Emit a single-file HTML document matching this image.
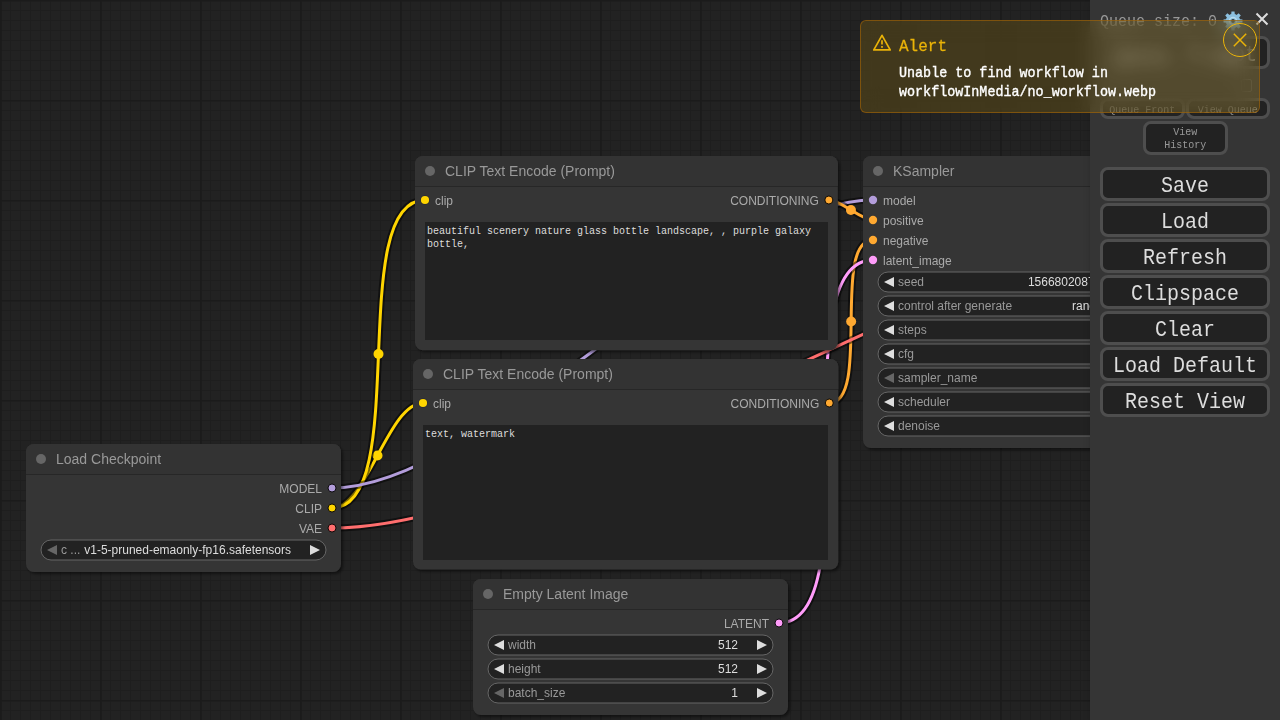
<!DOCTYPE html>
<html><head><meta charset="utf-8"><style>
*{box-sizing:border-box}
html,body{margin:0;padding:0;width:1280px;height:720px;overflow:hidden;background:#222}
.ta{position:absolute;background:#222;color:#ddd;font-family:"Liberation Mono",monospace;font-size:10px;line-height:13px;padding:3px 2px 2px 2px;overflow:hidden;word-wrap:break-word;white-space:pre-wrap}
.menu{will-change:transform;box-shadow:3px 3px 8px rgba(0,0,0,0.4);position:absolute;left:1090px;top:0;width:190px;height:720px;background:#353535;font-family:"Liberation Mono",monospace;color:#999;font-size:15px;text-align:center}
.menu>*{position:absolute}
.qs{left:10px;top:12.5px;line-height:20px;white-space:pre;transform:scaleY(1.1);transform-origin:0 15.5px}
.gear{left:132.5px;top:10.5px}
.cls{left:165px;top:11.5px}
.b{left:10px;width:170px;height:33.8px;background:#222;color:#ddd;border:3px solid #4e4e4e;border-radius:8px;font-size:20px;line-height:27.8px;white-space:pre}
.s{font-size:10px;color:#999;background:#222;border:3px solid #4e4e4e;border-radius:8px;white-space:pre}
.t{display:inline-block;transform:translateY(2.2px) scaleY(1.12)}
.chk{left:151px;top:79px;width:11px;height:12.5px;border:1px solid #767676;border-radius:2px;background:transparent}
.toast{position:absolute;left:860px;top:20px;width:400px;height:93px;border:1px solid rgba(161,98,7,0.64);border-radius:6px;background:rgba(234,179,8,0.16);backdrop-filter:blur(10px);font-family:"Liberation Mono",monospace}
.warn{position:absolute;left:11px;top:12.6px}
.sum{position:absolute;left:38px;top:16px;color:#eab308;font-size:16px;line-height:18px;-webkit-text-stroke:0.25px #eab308;transform:scaleY(1.06);transform-origin:0 0}
.det{position:absolute;left:38px;top:44px;color:#fff;font-size:13.4px;font-weight:normal;-webkit-text-stroke:0.35px #fff;line-height:16.7px;white-space:pre;transform:scaleY(1.12);transform-origin:0 0}
.close{position:absolute;left:362px;top:2px;width:34px;height:34px;border:1px solid #eab308;border-radius:50%;display:flex;align-items:center;justify-content:center}
</style></head><body>
<svg width="1280" height="720" viewBox="0 0 1280 720" style="position:absolute;left:0;top:0;will-change:transform"><defs><pattern id="grid" width="100" height="100" patternUnits="userSpaceOnUse"><g shape-rendering="crispEdges"><rect width="100" height="100" fill="rgb(34,34,34)"/><rect x="0" y="0" width="100" height="1" fill="rgb(27,27,27)"/><rect x="0" y="1" width="1" height="9" fill="rgb(27,27,27)"/><rect x="0" y="11" width="1" height="9" fill="rgb(27,27,27)"/><rect x="0" y="21" width="1" height="9" fill="rgb(27,27,27)"/><rect x="0" y="31" width="1" height="9" fill="rgb(27,27,27)"/><rect x="0" y="41" width="1" height="9" fill="rgb(27,27,27)"/><rect x="0" y="51" width="1" height="9" fill="rgb(27,27,27)"/><rect x="0" y="61" width="1" height="9" fill="rgb(27,27,27)"/><rect x="0" y="71" width="1" height="9" fill="rgb(27,27,27)"/><rect x="0" y="81" width="1" height="19" fill="rgb(27,27,27)"/><rect x="1" y="1" width="1" height="9" fill="rgb(28,28,28)"/><rect x="1" y="11" width="1" height="9" fill="rgb(28,28,28)"/><rect x="1" y="21" width="1" height="9" fill="rgb(28,28,28)"/><rect x="1" y="31" width="1" height="9" fill="rgb(28,28,28)"/><rect x="1" y="41" width="1" height="9" fill="rgb(28,28,28)"/><rect x="1" y="51" width="1" height="9" fill="rgb(28,28,28)"/><rect x="1" y="61" width="1" height="9" fill="rgb(28,28,28)"/><rect x="1" y="71" width="1" height="9" fill="rgb(28,28,28)"/><rect x="1" y="81" width="1" height="19" fill="rgb(28,28,28)"/><rect x="2" y="1" width="8" height="1" fill="rgb(30,30,30)"/><rect x="10" y="1" width="1" height="1" fill="rgb(29,29,29)"/><rect x="11" y="1" width="9" height="1" fill="rgb(30,30,30)"/><rect x="20" y="1" width="1" height="1" fill="rgb(29,29,29)"/><rect x="21" y="1" width="9" height="1" fill="rgb(30,30,30)"/><rect x="30" y="1" width="1" height="1" fill="rgb(29,29,29)"/><rect x="31" y="1" width="9" height="1" fill="rgb(30,30,30)"/><rect x="40" y="1" width="1" height="1" fill="rgb(29,29,29)"/><rect x="41" y="1" width="9" height="1" fill="rgb(30,30,30)"/><rect x="50" y="1" width="1" height="1" fill="rgb(29,29,29)"/><rect x="51" y="1" width="9" height="1" fill="rgb(30,30,30)"/><rect x="60" y="1" width="1" height="1" fill="rgb(29,29,29)"/><rect x="61" y="1" width="9" height="1" fill="rgb(30,30,30)"/><rect x="70" y="1" width="1" height="1" fill="rgb(29,29,29)"/><rect x="71" y="1" width="9" height="1" fill="rgb(30,30,30)"/><rect x="80" y="1" width="1" height="1" fill="rgb(29,29,29)"/><rect x="81" y="1" width="9" height="1" fill="rgb(30,30,30)"/><rect x="90" y="1" width="1" height="1" fill="rgb(29,29,29)"/><rect x="91" y="1" width="9" height="1" fill="rgb(30,30,30)"/><rect x="10" y="2" width="1" height="8" fill="rgb(30,30,30)"/><rect x="10" y="11" width="1" height="9" fill="rgb(30,30,30)"/><rect x="10" y="21" width="1" height="9" fill="rgb(30,30,30)"/><rect x="10" y="31" width="1" height="9" fill="rgb(30,30,30)"/><rect x="10" y="41" width="1" height="9" fill="rgb(30,30,30)"/><rect x="10" y="51" width="1" height="9" fill="rgb(30,30,30)"/><rect x="10" y="61" width="1" height="9" fill="rgb(30,30,30)"/><rect x="10" y="71" width="1" height="9" fill="rgb(30,30,30)"/><rect x="10" y="81" width="1" height="9" fill="rgb(30,30,30)"/><rect x="10" y="91" width="1" height="9" fill="rgb(30,30,30)"/><rect x="20" y="2" width="1" height="8" fill="rgb(30,30,30)"/><rect x="20" y="11" width="1" height="9" fill="rgb(30,30,30)"/><rect x="20" y="21" width="1" height="9" fill="rgb(30,30,30)"/><rect x="20" y="31" width="1" height="9" fill="rgb(30,30,30)"/><rect x="20" y="41" width="1" height="9" fill="rgb(30,30,30)"/><rect x="20" y="51" width="1" height="9" fill="rgb(30,30,30)"/><rect x="20" y="61" width="1" height="9" fill="rgb(30,30,30)"/><rect x="20" y="71" width="1" height="9" fill="rgb(30,30,30)"/><rect x="20" y="81" width="1" height="9" fill="rgb(30,30,30)"/><rect x="20" y="91" width="1" height="9" fill="rgb(30,30,30)"/><rect x="30" y="2" width="1" height="8" fill="rgb(30,30,30)"/><rect x="30" y="11" width="1" height="9" fill="rgb(30,30,30)"/><rect x="30" y="21" width="1" height="9" fill="rgb(30,30,30)"/><rect x="30" y="31" width="1" height="9" fill="rgb(30,30,30)"/><rect x="30" y="41" width="1" height="9" fill="rgb(30,30,30)"/><rect x="30" y="51" width="1" height="9" fill="rgb(30,30,30)"/><rect x="30" y="61" width="1" height="9" fill="rgb(30,30,30)"/><rect x="30" y="71" width="1" height="9" fill="rgb(30,30,30)"/><rect x="30" y="81" width="1" height="9" fill="rgb(30,30,30)"/><rect x="30" y="91" width="1" height="9" fill="rgb(30,30,30)"/><rect x="40" y="2" width="1" height="8" fill="rgb(30,30,30)"/><rect x="40" y="11" width="1" height="9" fill="rgb(30,30,30)"/><rect x="40" y="21" width="1" height="9" fill="rgb(30,30,30)"/><rect x="40" y="31" width="1" height="9" fill="rgb(30,30,30)"/><rect x="40" y="41" width="1" height="9" fill="rgb(30,30,30)"/><rect x="40" y="51" width="1" height="9" fill="rgb(30,30,30)"/><rect x="40" y="61" width="1" height="9" fill="rgb(30,30,30)"/><rect x="40" y="71" width="1" height="9" fill="rgb(30,30,30)"/><rect x="40" y="81" width="1" height="9" fill="rgb(30,30,30)"/><rect x="40" y="91" width="1" height="9" fill="rgb(30,30,30)"/><rect x="50" y="2" width="1" height="8" fill="rgb(30,30,30)"/><rect x="50" y="11" width="1" height="9" fill="rgb(30,30,30)"/><rect x="50" y="21" width="1" height="9" fill="rgb(30,30,30)"/><rect x="50" y="31" width="1" height="9" fill="rgb(30,30,30)"/><rect x="50" y="41" width="1" height="9" fill="rgb(30,30,30)"/><rect x="50" y="51" width="1" height="9" fill="rgb(30,30,30)"/><rect x="50" y="61" width="1" height="9" fill="rgb(30,30,30)"/><rect x="50" y="71" width="1" height="9" fill="rgb(30,30,30)"/><rect x="50" y="81" width="1" height="9" fill="rgb(30,30,30)"/><rect x="50" y="91" width="1" height="9" fill="rgb(30,30,30)"/><rect x="60" y="2" width="1" height="8" fill="rgb(30,30,30)"/><rect x="60" y="11" width="1" height="9" fill="rgb(30,30,30)"/><rect x="60" y="21" width="1" height="9" fill="rgb(30,30,30)"/><rect x="60" y="31" width="1" height="9" fill="rgb(30,30,30)"/><rect x="60" y="41" width="1" height="9" fill="rgb(30,30,30)"/><rect x="60" y="51" width="1" height="9" fill="rgb(30,30,30)"/><rect x="60" y="61" width="1" height="9" fill="rgb(30,30,30)"/><rect x="60" y="71" width="1" height="9" fill="rgb(30,30,30)"/><rect x="60" y="81" width="1" height="9" fill="rgb(30,30,30)"/><rect x="60" y="91" width="1" height="9" fill="rgb(30,30,30)"/><rect x="70" y="2" width="1" height="8" fill="rgb(30,30,30)"/><rect x="70" y="11" width="1" height="9" fill="rgb(30,30,30)"/><rect x="70" y="21" width="1" height="9" fill="rgb(30,30,30)"/><rect x="70" y="31" width="1" height="9" fill="rgb(30,30,30)"/><rect x="70" y="41" width="1" height="9" fill="rgb(30,30,30)"/><rect x="70" y="51" width="1" height="9" fill="rgb(30,30,30)"/><rect x="70" y="61" width="1" height="9" fill="rgb(30,30,30)"/><rect x="70" y="71" width="1" height="9" fill="rgb(30,30,30)"/><rect x="70" y="81" width="1" height="9" fill="rgb(30,30,30)"/><rect x="70" y="91" width="1" height="9" fill="rgb(30,30,30)"/><rect x="80" y="2" width="1" height="8" fill="rgb(30,30,30)"/><rect x="80" y="11" width="1" height="9" fill="rgb(30,30,30)"/><rect x="80" y="21" width="1" height="9" fill="rgb(30,30,30)"/><rect x="80" y="31" width="1" height="9" fill="rgb(30,30,30)"/><rect x="80" y="41" width="1" height="9" fill="rgb(30,30,30)"/><rect x="80" y="51" width="1" height="9" fill="rgb(30,30,30)"/><rect x="80" y="61" width="1" height="9" fill="rgb(30,30,30)"/><rect x="80" y="71" width="1" height="9" fill="rgb(30,30,30)"/><rect x="80" y="81" width="1" height="9" fill="rgb(30,30,30)"/><rect x="80" y="91" width="1" height="9" fill="rgb(30,30,30)"/><rect x="90" y="2" width="1" height="8" fill="rgb(30,30,30)"/><rect x="90" y="11" width="1" height="9" fill="rgb(30,30,30)"/><rect x="90" y="21" width="1" height="9" fill="rgb(30,30,30)"/><rect x="90" y="31" width="1" height="9" fill="rgb(30,30,30)"/><rect x="90" y="41" width="1" height="9" fill="rgb(30,30,30)"/><rect x="90" y="51" width="1" height="9" fill="rgb(30,30,30)"/><rect x="90" y="61" width="1" height="9" fill="rgb(30,30,30)"/><rect x="90" y="71" width="1" height="9" fill="rgb(30,30,30)"/><rect x="90" y="81" width="1" height="9" fill="rgb(30,30,30)"/><rect x="90" y="91" width="1" height="9" fill="rgb(30,30,30)"/><rect x="0" y="10" width="2" height="1" fill="rgb(27,27,27)"/><rect x="0" y="20" width="2" height="1" fill="rgb(27,27,27)"/><rect x="0" y="30" width="2" height="1" fill="rgb(27,27,27)"/><rect x="0" y="40" width="2" height="1" fill="rgb(27,27,27)"/><rect x="0" y="50" width="2" height="1" fill="rgb(27,27,27)"/><rect x="0" y="60" width="2" height="1" fill="rgb(27,27,27)"/><rect x="0" y="70" width="2" height="1" fill="rgb(27,27,27)"/><rect x="0" y="80" width="2" height="1" fill="rgb(27,27,27)"/><rect x="2" y="10" width="98" height="1" fill="rgb(30,30,30)"/><rect x="2" y="20" width="98" height="1" fill="rgb(30,30,30)"/><rect x="2" y="30" width="98" height="1" fill="rgb(30,30,30)"/><rect x="2" y="40" width="98" height="1" fill="rgb(30,30,30)"/><rect x="2" y="50" width="98" height="1" fill="rgb(30,30,30)"/><rect x="2" y="60" width="98" height="1" fill="rgb(30,30,30)"/><rect x="2" y="70" width="98" height="1" fill="rgb(30,30,30)"/><rect x="2" y="80" width="98" height="1" fill="rgb(30,30,30)"/><rect x="2" y="90" width="98" height="1" fill="rgb(30,30,30)"/></g></pattern><filter id="sh" x="-10%" y="-10%" width="120%" height="120%"><feGaussianBlur in="SourceAlpha" stdDeviation="1.5"/><feOffset dx="2" dy="2"/><feComponentTransfer><feFuncA type="linear" slope="0.5"/></feComponentTransfer><feMerge><feMergeNode/><feMergeNode in="SourceGraphic"/></feMerge></filter></defs><rect width="1280" height="720" fill="url(#grid)"/><path d="M332.00,508.00 C366.74,508.00 388.26,403.00 423.00,403.00" fill="none" stroke="rgba(0,0,0,0.5)" stroke-width="7" stroke-linecap="round"/><path d="M332.00,508.00 C366.74,508.00 388.26,403.00 423.00,403.00" fill="none" stroke="#FFD500" stroke-width="3"/><circle cx="377.50" cy="455.50" r="5" fill="#FFD500"/><path d="M332.00,508.00 C412.43,508.00 344.57,200.00 425.00,200.00" fill="none" stroke="rgba(0,0,0,0.5)" stroke-width="7" stroke-linecap="round"/><path d="M332.00,508.00 C412.43,508.00 344.57,200.00 425.00,200.00" fill="none" stroke="#FFD500" stroke-width="3"/><circle cx="378.50" cy="354.00" r="5" fill="#FFD500"/><path d="M332.00,488.00 C485.22,488.00 719.78,200.00 873.00,200.00" fill="none" stroke="rgba(0,0,0,0.5)" stroke-width="7" stroke-linecap="round"/><path d="M332.00,488.00 C485.22,488.00 719.78,200.00 873.00,200.00" fill="none" stroke="#B39DDB" stroke-width="3"/><circle cx="602.50" cy="344.00" r="5" fill="#B39DDB"/><path d="M828.85,200.00 C840.97,200.00 860.88,220.00 873.00,220.00" fill="none" stroke="rgba(0,0,0,0.5)" stroke-width="7" stroke-linecap="round"/><path d="M828.85,200.00 C840.97,200.00 860.88,220.00 873.00,220.00" fill="none" stroke="#FFA931" stroke-width="3"/><circle cx="850.92" cy="210.00" r="5" fill="#FFA931"/><path d="M829.28,403.00 C871.47,403.00 830.81,240.00 873.00,240.00" fill="none" stroke="rgba(0,0,0,0.5)" stroke-width="7" stroke-linecap="round"/><path d="M829.28,403.00 C871.47,403.00 830.81,240.00 873.00,240.00" fill="none" stroke="#FFA931" stroke-width="3"/><circle cx="851.14" cy="321.50" r="5" fill="#FFA931"/><path d="M779.00,623.00 C872.74,623.00 779.26,260.00 873.00,260.00" fill="none" stroke="rgba(0,0,0,0.5)" stroke-width="7" stroke-linecap="round"/><path d="M779.00,623.00 C872.74,623.00 779.26,260.00 873.00,260.00" fill="none" stroke="#FF9CF9" stroke-width="3"/><circle cx="826.00" cy="441.50" r="5" fill="#FF9CF9"/><path d="M1169.00,200.00 C1181.51,200.00 1206.49,202.00 1219.00,202.00" fill="none" stroke="rgba(0,0,0,0.5)" stroke-width="7" stroke-linecap="round"/><path d="M1169.00,200.00 C1181.51,200.00 1206.49,202.00 1219.00,202.00" fill="none" stroke="#FF9CF9" stroke-width="3"/><circle cx="1194.00" cy="201.00" r="5" fill="#FF9CF9"/><path d="M332.00,528.00 C566.57,528.00 984.43,222.00 1219.00,222.00" fill="none" stroke="rgba(0,0,0,0.5)" stroke-width="7" stroke-linecap="round"/><path d="M332.00,528.00 C566.57,528.00 984.43,222.00 1219.00,222.00" fill="none" stroke="#FF6E6E" stroke-width="3"/><circle cx="775.50" cy="375.00" r="5" fill="#FF6E6E"/><g><rect x="26" y="444" width="315" height="128" rx="8" ry="8" fill="#353535" filter="url(#sh)"/><path d="M26,474 V452 A8,8 0 0 1 34,444 H333 A8,8 0 0 1 341,452 V474 Z" fill="#333"/><rect x="26" y="474" width="315" height="1" fill="rgba(0,0,0,0.25)"/><circle cx="41" cy="459" r="5" fill="#666"/><text x="56" y="464" font-family="Liberation Sans, sans-serif" font-size="14" fill="#999">Load Checkpoint</text><circle cx="332" cy="488.0" r="4" fill="#B39DDB" stroke="rgba(0,0,0,0.9)" stroke-width="1"/><text x="322" y="493.0" font-family="Liberation Sans, sans-serif" font-size="12" fill="#AAA" text-anchor="end">MODEL</text><circle cx="332" cy="508.0" r="4" fill="#FFD500" stroke="rgba(0,0,0,0.9)" stroke-width="1"/><text x="322" y="513.0" font-family="Liberation Sans, sans-serif" font-size="12" fill="#AAA" text-anchor="end">CLIP</text><circle cx="332" cy="528.0" r="4" fill="#FF6E6E" stroke="rgba(0,0,0,0.9)" stroke-width="1"/><text x="322" y="533.0" font-family="Liberation Sans, sans-serif" font-size="12" fill="#AAA" text-anchor="end">VAE</text><rect x="41" y="540.0" width="285" height="20" rx="10" ry="10" fill="#222" stroke="#666" stroke-width="1"/><path d="M57,545.0 L47,550.0 L57,555.0 Z" fill="#666"/><path d="M310,545.0 L320,550.0 L310,555.0 Z" fill="#DDD"/><text x="61" y="554.0" font-family="Liberation Sans, sans-serif" font-size="12" fill="#999">c ...</text><text x="291" y="554.0" font-family="Liberation Sans, sans-serif" font-size="12" fill="#DDD" text-anchor="end">v1-5-pruned-emaonly-fp16.safetensors</text></g><g><rect x="415" y="156" width="422.85" height="194.31" rx="8" ry="8" fill="#353535" filter="url(#sh)"/><path d="M415,186 V164 A8,8 0 0 1 423,156 H829.85 A8,8 0 0 1 837.85,164 V186 Z" fill="#333"/><rect x="415" y="186" width="422.85" height="1" fill="rgba(0,0,0,0.25)"/><circle cx="430" cy="171" r="5" fill="#666"/><text x="445" y="176" font-family="Liberation Sans, sans-serif" font-size="14" fill="#999">CLIP Text Encode (Prompt)</text><circle cx="425" cy="200.0" r="4.6" fill="rgba(15,20,45,0.5)"/><circle cx="425" cy="200.0" r="4.1" fill="#FFD500"/><text x="435" y="205.0" font-family="Liberation Sans, sans-serif" font-size="12" fill="#AAA">clip</text><circle cx="828.85" cy="200.0" r="4" fill="#FFA931" stroke="rgba(0,0,0,0.9)" stroke-width="1"/><text x="818.85" y="205.0" font-family="Liberation Sans, sans-serif" font-size="12" fill="#AAA" text-anchor="end">CONDITIONING</text></g><g><rect x="413" y="359" width="425.28" height="210.61" rx="8" ry="8" fill="#353535" filter="url(#sh)"/><path d="M413,389 V367 A8,8 0 0 1 421,359 H830.28 A8,8 0 0 1 838.28,367 V389 Z" fill="#333"/><rect x="413" y="389" width="425.28" height="1" fill="rgba(0,0,0,0.25)"/><circle cx="428" cy="374" r="5" fill="#666"/><text x="443" y="379" font-family="Liberation Sans, sans-serif" font-size="14" fill="#999">CLIP Text Encode (Prompt)</text><circle cx="423" cy="403.0" r="4.6" fill="rgba(15,20,45,0.5)"/><circle cx="423" cy="403.0" r="4.1" fill="#FFD500"/><text x="433" y="408.0" font-family="Liberation Sans, sans-serif" font-size="12" fill="#AAA">clip</text><circle cx="829.28" cy="403.0" r="4" fill="#FFA931" stroke="rgba(0,0,0,0.9)" stroke-width="1"/><text x="819.28" y="408.0" font-family="Liberation Sans, sans-serif" font-size="12" fill="#AAA" text-anchor="end">CONDITIONING</text></g><g><rect x="863" y="156" width="315" height="292" rx="8" ry="8" fill="#353535" filter="url(#sh)"/><path d="M863,186 V164 A8,8 0 0 1 871,156 H1170 A8,8 0 0 1 1178,164 V186 Z" fill="#333"/><rect x="863" y="186" width="315" height="1" fill="rgba(0,0,0,0.25)"/><circle cx="878" cy="171" r="5" fill="#666"/><text x="893" y="176" font-family="Liberation Sans, sans-serif" font-size="14" fill="#999">KSampler</text><circle cx="873" cy="200.0" r="4.15" fill="#B39DDB"/><text x="883" y="205.0" font-family="Liberation Sans, sans-serif" font-size="12" fill="#AAA">model</text><circle cx="873" cy="220.0" r="4.15" fill="#FFA931"/><text x="883" y="225.0" font-family="Liberation Sans, sans-serif" font-size="12" fill="#AAA">positive</text><circle cx="873" cy="240.0" r="4.15" fill="#FFA931"/><text x="883" y="245.0" font-family="Liberation Sans, sans-serif" font-size="12" fill="#AAA">negative</text><circle cx="873" cy="260.0" r="4.15" fill="#FF9CF9"/><text x="883" y="265.0" font-family="Liberation Sans, sans-serif" font-size="12" fill="#AAA">latent_image</text><circle cx="1169" cy="200.0" r="4" fill="#FF9CF9" stroke="rgba(0,0,0,0.9)" stroke-width="1"/><text x="1159" y="205.0" font-family="Liberation Sans, sans-serif" font-size="12" fill="#AAA" text-anchor="end">LATENT</text><rect x="878" y="272.0" width="285" height="20" rx="10" ry="10" fill="#222" stroke="#666" stroke-width="1"/><path d="M894,277.0 L884,282.0 L894,287.0 Z" fill="#DDD"/><path d="M1147,277.0 L1157,282.0 L1147,287.0 Z" fill="#DDD"/><text x="898" y="286.0" font-family="Liberation Sans, sans-serif" font-size="12" fill="#999">seed</text><text x="1128" y="286.0" font-family="Liberation Sans, sans-serif" font-size="12" fill="#DDD" text-anchor="end">156680208700286</text><rect x="878" y="296.0" width="285" height="20" rx="10" ry="10" fill="#222" stroke="#666" stroke-width="1"/><path d="M894,301.0 L884,306.0 L894,311.0 Z" fill="#DDD"/><path d="M1147,301.0 L1157,306.0 L1147,311.0 Z" fill="#DDD"/><text x="898" y="310.0" font-family="Liberation Sans, sans-serif" font-size="12" fill="#999">control after generate</text><text x="1128" y="310.0" font-family="Liberation Sans, sans-serif" font-size="12" fill="#DDD" text-anchor="end">randomize</text><rect x="878" y="320.0" width="285" height="20" rx="10" ry="10" fill="#222" stroke="#666" stroke-width="1"/><path d="M894,325.0 L884,330.0 L894,335.0 Z" fill="#DDD"/><path d="M1147,325.0 L1157,330.0 L1147,335.0 Z" fill="#DDD"/><text x="898" y="334.0" font-family="Liberation Sans, sans-serif" font-size="12" fill="#999">steps</text><text x="1128" y="334.0" font-family="Liberation Sans, sans-serif" font-size="12" fill="#DDD" text-anchor="end">20</text><rect x="878" y="344.0" width="285" height="20" rx="10" ry="10" fill="#222" stroke="#666" stroke-width="1"/><path d="M894,349.0 L884,354.0 L894,359.0 Z" fill="#DDD"/><path d="M1147,349.0 L1157,354.0 L1147,359.0 Z" fill="#DDD"/><text x="898" y="358.0" font-family="Liberation Sans, sans-serif" font-size="12" fill="#999">cfg</text><text x="1128" y="358.0" font-family="Liberation Sans, sans-serif" font-size="12" fill="#DDD" text-anchor="end">8.0</text><rect x="878" y="368.0" width="285" height="20" rx="10" ry="10" fill="#222" stroke="#666" stroke-width="1"/><path d="M894,373.0 L884,378.0 L894,383.0 Z" fill="#666"/><path d="M1147,373.0 L1157,378.0 L1147,383.0 Z" fill="#DDD"/><text x="898" y="382.0" font-family="Liberation Sans, sans-serif" font-size="12" fill="#999">sampler_name</text><text x="1128" y="382.0" font-family="Liberation Sans, sans-serif" font-size="12" fill="#DDD" text-anchor="end">euler</text><rect x="878" y="392.0" width="285" height="20" rx="10" ry="10" fill="#222" stroke="#666" stroke-width="1"/><path d="M894,397.0 L884,402.0 L894,407.0 Z" fill="#DDD"/><path d="M1147,397.0 L1157,402.0 L1147,407.0 Z" fill="#DDD"/><text x="898" y="406.0" font-family="Liberation Sans, sans-serif" font-size="12" fill="#999">scheduler</text><text x="1128" y="406.0" font-family="Liberation Sans, sans-serif" font-size="12" fill="#DDD" text-anchor="end">normal</text><rect x="878" y="416.0" width="285" height="20" rx="10" ry="10" fill="#222" stroke="#666" stroke-width="1"/><path d="M894,421.0 L884,426.0 L894,431.0 Z" fill="#DDD"/><path d="M1147,421.0 L1157,426.0 L1147,431.0 Z" fill="#666"/><text x="898" y="430.0" font-family="Liberation Sans, sans-serif" font-size="12" fill="#999">denoise</text><text x="1128" y="430.0" font-family="Liberation Sans, sans-serif" font-size="12" fill="#DDD" text-anchor="end">1.00</text></g><g><rect x="473" y="579" width="315" height="136" rx="8" ry="8" fill="#353535" filter="url(#sh)"/><path d="M473,609 V587 A8,8 0 0 1 481,579 H780 A8,8 0 0 1 788,587 V609 Z" fill="#333"/><rect x="473" y="609" width="315" height="1" fill="rgba(0,0,0,0.25)"/><circle cx="488" cy="594" r="5" fill="#666"/><text x="503" y="599" font-family="Liberation Sans, sans-serif" font-size="14" fill="#999">Empty Latent Image</text><circle cx="779" cy="623.0" r="4" fill="#FF9CF9" stroke="rgba(0,0,0,0.9)" stroke-width="1"/><text x="769" y="628.0" font-family="Liberation Sans, sans-serif" font-size="12" fill="#AAA" text-anchor="end">LATENT</text><rect x="488" y="635.0" width="285" height="20" rx="10" ry="10" fill="#222" stroke="#666" stroke-width="1"/><path d="M504,640.0 L494,645.0 L504,650.0 Z" fill="#DDD"/><path d="M757,640.0 L767,645.0 L757,650.0 Z" fill="#DDD"/><text x="508" y="649.0" font-family="Liberation Sans, sans-serif" font-size="12" fill="#999">width</text><text x="738" y="649.0" font-family="Liberation Sans, sans-serif" font-size="12" fill="#DDD" text-anchor="end">512</text><rect x="488" y="659.0" width="285" height="20" rx="10" ry="10" fill="#222" stroke="#666" stroke-width="1"/><path d="M504,664.0 L494,669.0 L504,674.0 Z" fill="#DDD"/><path d="M757,664.0 L767,669.0 L757,674.0 Z" fill="#DDD"/><text x="508" y="673.0" font-family="Liberation Sans, sans-serif" font-size="12" fill="#999">height</text><text x="738" y="673.0" font-family="Liberation Sans, sans-serif" font-size="12" fill="#DDD" text-anchor="end">512</text><rect x="488" y="683.0" width="285" height="20" rx="10" ry="10" fill="#222" stroke="#666" stroke-width="1"/><path d="M504,688.0 L494,693.0 L504,698.0 Z" fill="#666"/><path d="M757,688.0 L767,693.0 L757,698.0 Z" fill="#DDD"/><text x="508" y="697.0" font-family="Liberation Sans, sans-serif" font-size="12" fill="#999">batch_size</text><text x="738" y="697.0" font-family="Liberation Sans, sans-serif" font-size="12" fill="#DDD" text-anchor="end">1</text></g></svg>
<div class="ta" style="left:425px;top:222px;width:402.85px;height:118.31px">beautiful scenery nature glass bottle landscape, , purple galaxy bottle,</div><div class="ta" style="left:423px;top:425px;width:405.28px;height:134.61px">text, watermark</div>

<div class="menu">
 <div class="qs">Queue size: 0</div>
 <svg class="gear" width="20" height="20" viewBox="0 0 20 20"><path d="M16.76,8.20 L19.48,8.47 L19.48,11.53 L16.76,11.80 L16.06,13.51 L17.78,15.62 L15.62,17.78 L13.51,16.06 L11.80,16.76 L11.53,19.48 L8.47,19.48 L8.20,16.76 L6.49,16.06 L4.38,17.78 L2.22,15.62 L3.94,13.51 L3.24,11.80 L0.52,11.53 L0.52,8.47 L3.24,8.20 L3.94,6.49 L2.22,4.38 L4.38,2.22 L6.49,3.94 L8.20,3.24 L8.47,0.52 L11.53,0.52 L11.80,3.24 L13.51,3.94 L15.62,2.22 L17.78,4.38 L16.06,6.49 Z" fill="#8cc0e0"/><circle cx="10" cy="10" r="7" fill="#8cc0e0"/><circle cx="10" cy="10" r="3.6" fill="none" stroke="#b9dcef" stroke-width="1.2"/><circle cx="10" cy="10" r="1.9" fill="#2a2f33"/></svg>
 <svg class="cls" width="14" height="14" viewBox="0 0 14 14"><path d="M1.5 1.5 L12.5 12.5 M12.5 1.5 L1.5 12.5" stroke="#ddd" stroke-width="2"/></svg>
 <div class="b qp" style="top:36.2px;height:33.3px"><span class="t">Queue Prompt</span></div>
 <div class="chk"></div>
 <div class="s" style="left:10px;top:98.2px;width:84.5px;height:20.5px;line-height:19px">Queue Front</div>
 <div class="s" style="left:95.5px;top:98.2px;width:84.5px;height:20.5px;line-height:19px">View Queue</div>
 <div class="s" style="left:53px;top:121.2px;width:84.7px;height:33.7px;line-height:13px;padding-top:2.2px">View<br>History</div>
 <div class="b" style="top:167.2px"><span class="t">Save</span></div><div class="b" style="top:203.2px"><span class="t">Load</span></div><div class="b" style="top:239.2px"><span class="t">Refresh</span></div><div class="b" style="top:275.2px"><span class="t">Clipspace</span></div><div class="b" style="top:311.2px"><span class="t">Clear</span></div><div class="b" style="top:347.2px"><span class="t">Load Default</span></div><div class="b" style="top:383.2px"><span class="t">Reset View</span></div>
</div>


<div class="toast">
 <svg class="warn" width="20" height="18" viewBox="0 0 20 18"><path d="M10 1.3 L18.2 15.9 H1.8 Z" fill="none" stroke="#eab308" stroke-width="1.7" stroke-linejoin="round"/><path d="M10 6.3 V10.6" stroke="#eab308" stroke-width="1.7" stroke-linecap="butt"/><rect x="9.15" y="12.0" width="1.7" height="1.8" fill="#eab308"/></svg>
 <div class="sum">Alert</div>
 <div class="det">Unable to find workflow in<br>workflowInMedia/no_workflow.webp</div>
 <div class="close"><svg width="14" height="14" viewBox="0 0 14 14"><path d="M0.8 0.8 L13.2 13.2 M13.2 0.8 L0.8 13.2" stroke="#eab308" stroke-width="1.5"/></svg></div>
</div>

</body></html>
